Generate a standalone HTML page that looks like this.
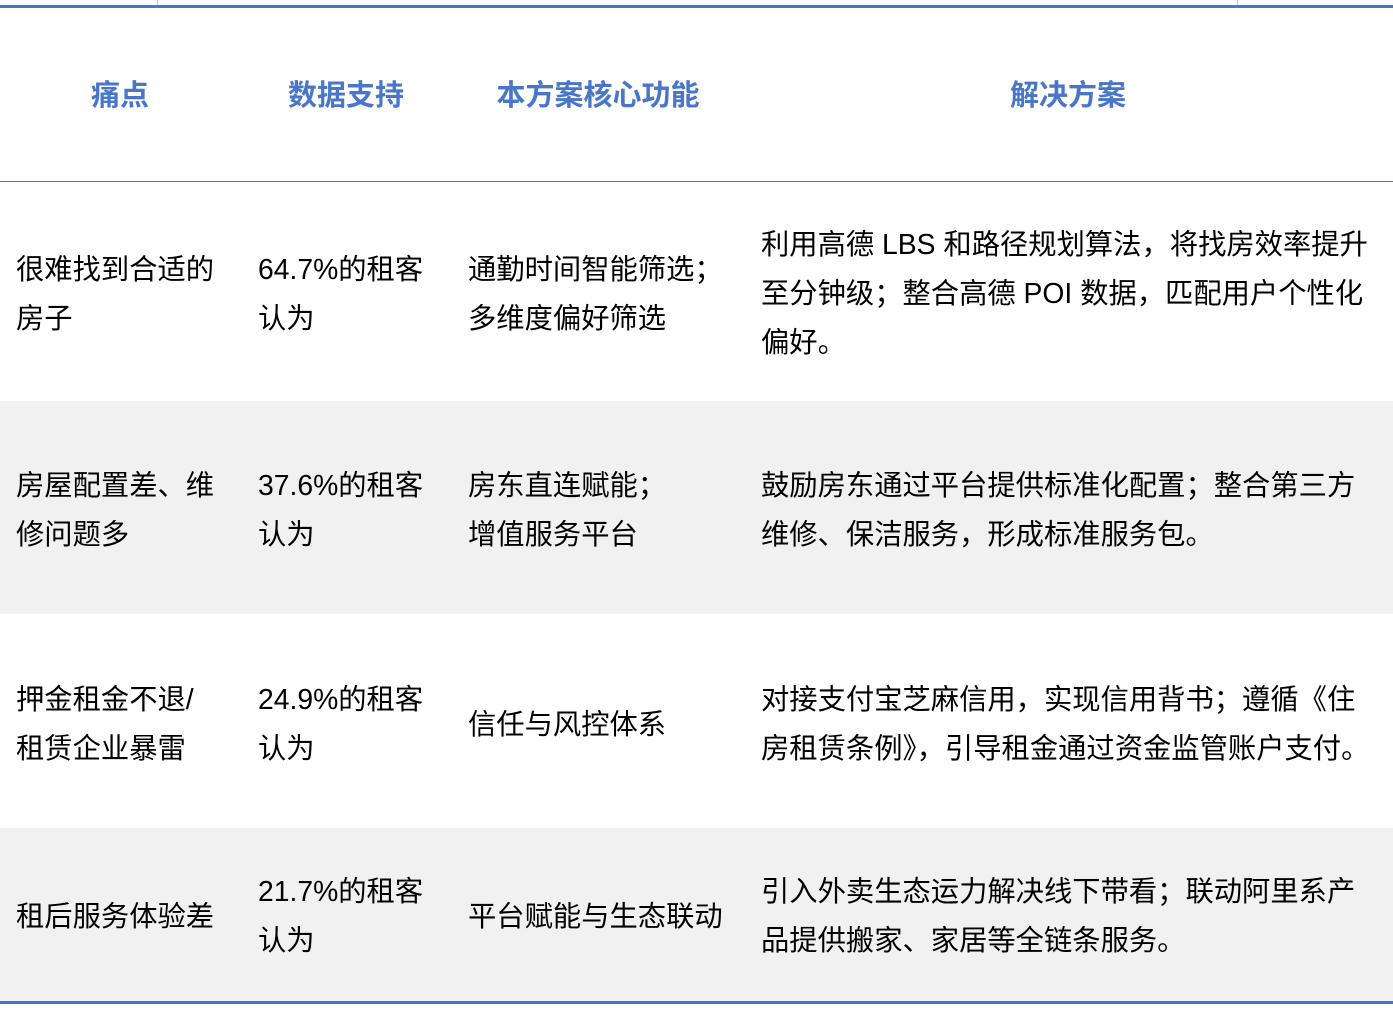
<!DOCTYPE html>
<html><head><meta charset="utf-8"><style>
html,body{margin:0;padding:0;background:#fff;width:1393px;height:1013px;overflow:hidden;position:relative;font-family:"Liberation Sans","Noto Sans CJK SC",sans-serif;}
.b{position:absolute;left:0;width:1393px}
.t{position:absolute;font-size:28.3px;line-height:49px;color:#000;white-space:nowrap}
.h{position:absolute;font-size:29px;font-weight:bold;color:#4a76c9;top:77px;line-height:38px;white-space:nowrap;transform:translateX(-50%)}
</style></head><body>
<div style="position:absolute;left:157px;top:0;width:1px;height:6px;background:#ccc"></div>
<div style="position:absolute;left:1237px;top:0;width:1px;height:6px;background:#ccc"></div>
<div class="b" style="top:5px;height:3px;background:#4a76c9"></div>
<div class="b" style="top:181px;height:1px;background:#4a76c9"></div>
<div class="b" style="top:401px;height:213px;background:#f1f1f1"></div>
<div class="b" style="top:828px;height:173px;background:#f1f1f1"></div>
<div class="b" style="top:1001px;height:3px;background:#4a76c9"></div>

<div class="h" style="left:120px">痛点</div>
<div class="h" style="left:346px">数据支持</div>
<div class="h" style="left:598px">本方案核心功能</div>
<div class="h" style="left:1068px">解决方案</div>

<div class="t" style="left:16px;top:245px">很难找到合适的<br>房子</div>
<div class="t" style="left:258px;top:245px">64.7%的租客<br>认为</div>
<div class="t" style="left:468px;top:245px">通勤时间智能筛选；<br>多维度偏好筛选</div>
<div class="t" style="left:761px;top:220px">利用高德 LBS 和路径规划算法，将找房效率提升<br>至分钟级；整合高德 POI 数据，匹配用户个性化<br>偏好。</div>

<div class="t" style="left:16px;top:461px">房屋配置差、维<br>修问题多</div>
<div class="t" style="left:258px;top:461px">37.6%的租客<br>认为</div>
<div class="t" style="left:468px;top:461px">房东直连赋能；<br>增值服务平台</div>
<div class="t" style="left:761px;top:461px">鼓励房东通过平台提供标准化配置；整合第三方<br>维修、保洁服务，形成标准服务包。</div>

<div class="t" style="left:16px;top:675px">押金租金不退/<br>租赁企业暴雷</div>
<div class="t" style="left:258px;top:675px">24.9%的租客<br>认为</div>
<div class="t" style="left:468px;top:700px">信任与风控体系</div>
<div class="t" style="left:761px;top:675px">对接支付宝芝麻信用，实现信用背书；遵循《住<br>房租赁条例》，引导租金通过资金监管账户支付。</div>

<div class="t" style="left:16px;top:892px">租后服务体验差</div>
<div class="t" style="left:258px;top:867px">21.7%的租客<br>认为</div>
<div class="t" style="left:468px;top:892px">平台赋能与生态联动</div>
<div class="t" style="left:761px;top:867px">引入外卖生态运力解决线下带看；联动阿里系产<br>品提供搬家、家居等全链条服务。</div>
</body></html>
